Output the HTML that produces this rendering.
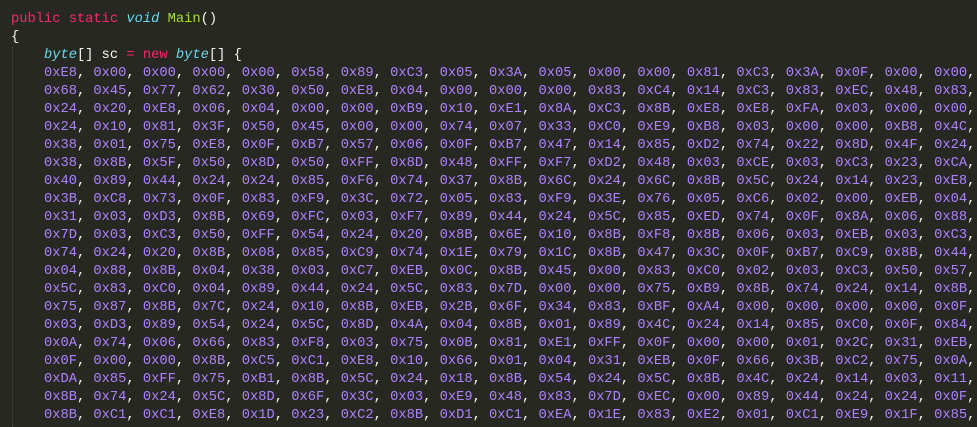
<!DOCTYPE html>
<html><head><meta charset="utf-8"><style>
html,body{margin:0;padding:0;background:#272822;width:977px;height:422px;overflow:hidden}
pre{margin:0;padding:11px 0 0 11px;font-family:"Liberation Mono",monospace;font-size:13.74px;line-height:18px;color:#F8F8F2;white-space:pre}
.k{color:#F92672}.t{color:#66D9EF;font-style:italic}.f{color:#A6E22E}.n{color:#AE81FF}
.g{position:absolute;left:12px;top:47px;height:380px;border-left:1px dotted #4a4a44}
</style></head><body>
<div class="g"></div>
<pre><span class="k">public</span> <span class="k">static</span> <span class="t">void</span> <span class="f">Main</span>()
{
    <span class="t">byte</span>[] sc <span class="k">=</span> <span class="k">new</span> <span class="t">byte</span>[] {
    <span class="n">0xE8</span>, <span class="n">0x00</span>, <span class="n">0x00</span>, <span class="n">0x00</span>, <span class="n">0x00</span>, <span class="n">0x58</span>, <span class="n">0x89</span>, <span class="n">0xC3</span>, <span class="n">0x05</span>, <span class="n">0x3A</span>, <span class="n">0x05</span>, <span class="n">0x00</span>, <span class="n">0x00</span>, <span class="n">0x81</span>, <span class="n">0xC3</span>, <span class="n">0x3A</span>, <span class="n">0x0F</span>, <span class="n">0x00</span>, <span class="n">0x00</span>,
    <span class="n">0x68</span>, <span class="n">0x45</span>, <span class="n">0x77</span>, <span class="n">0x62</span>, <span class="n">0x30</span>, <span class="n">0x50</span>, <span class="n">0xE8</span>, <span class="n">0x04</span>, <span class="n">0x00</span>, <span class="n">0x00</span>, <span class="n">0x00</span>, <span class="n">0x83</span>, <span class="n">0xC4</span>, <span class="n">0x14</span>, <span class="n">0xC3</span>, <span class="n">0x83</span>, <span class="n">0xEC</span>, <span class="n">0x48</span>, <span class="n">0x83</span>,
    <span class="n">0x24</span>, <span class="n">0x20</span>, <span class="n">0xE8</span>, <span class="n">0x06</span>, <span class="n">0x04</span>, <span class="n">0x00</span>, <span class="n">0x00</span>, <span class="n">0xB9</span>, <span class="n">0x10</span>, <span class="n">0xE1</span>, <span class="n">0x8A</span>, <span class="n">0xC3</span>, <span class="n">0x8B</span>, <span class="n">0xE8</span>, <span class="n">0xE8</span>, <span class="n">0xFA</span>, <span class="n">0x03</span>, <span class="n">0x00</span>, <span class="n">0x00</span>,
    <span class="n">0x24</span>, <span class="n">0x10</span>, <span class="n">0x81</span>, <span class="n">0x3F</span>, <span class="n">0x50</span>, <span class="n">0x45</span>, <span class="n">0x00</span>, <span class="n">0x00</span>, <span class="n">0x74</span>, <span class="n">0x07</span>, <span class="n">0x33</span>, <span class="n">0xC0</span>, <span class="n">0xE9</span>, <span class="n">0xB8</span>, <span class="n">0x03</span>, <span class="n">0x00</span>, <span class="n">0x00</span>, <span class="n">0xB8</span>, <span class="n">0x4C</span>,
    <span class="n">0x38</span>, <span class="n">0x01</span>, <span class="n">0x75</span>, <span class="n">0xE8</span>, <span class="n">0x0F</span>, <span class="n">0xB7</span>, <span class="n">0x57</span>, <span class="n">0x06</span>, <span class="n">0x0F</span>, <span class="n">0xB7</span>, <span class="n">0x47</span>, <span class="n">0x14</span>, <span class="n">0x85</span>, <span class="n">0xD2</span>, <span class="n">0x74</span>, <span class="n">0x22</span>, <span class="n">0x8D</span>, <span class="n">0x4F</span>, <span class="n">0x24</span>,
    <span class="n">0x38</span>, <span class="n">0x8B</span>, <span class="n">0x5F</span>, <span class="n">0x50</span>, <span class="n">0x8D</span>, <span class="n">0x50</span>, <span class="n">0xFF</span>, <span class="n">0x8D</span>, <span class="n">0x48</span>, <span class="n">0xFF</span>, <span class="n">0xF7</span>, <span class="n">0xD2</span>, <span class="n">0x48</span>, <span class="n">0x03</span>, <span class="n">0xCE</span>, <span class="n">0x03</span>, <span class="n">0xC3</span>, <span class="n">0x23</span>, <span class="n">0xCA</span>,
    <span class="n">0x40</span>, <span class="n">0x89</span>, <span class="n">0x44</span>, <span class="n">0x24</span>, <span class="n">0x24</span>, <span class="n">0x85</span>, <span class="n">0xF6</span>, <span class="n">0x74</span>, <span class="n">0x37</span>, <span class="n">0x8B</span>, <span class="n">0x6C</span>, <span class="n">0x24</span>, <span class="n">0x6C</span>, <span class="n">0x8B</span>, <span class="n">0x5C</span>, <span class="n">0x24</span>, <span class="n">0x14</span>, <span class="n">0x23</span>, <span class="n">0xE8</span>,
    <span class="n">0x3B</span>, <span class="n">0xC8</span>, <span class="n">0x73</span>, <span class="n">0x0F</span>, <span class="n">0x83</span>, <span class="n">0xF9</span>, <span class="n">0x3C</span>, <span class="n">0x72</span>, <span class="n">0x05</span>, <span class="n">0x83</span>, <span class="n">0xF9</span>, <span class="n">0x3E</span>, <span class="n">0x76</span>, <span class="n">0x05</span>, <span class="n">0xC6</span>, <span class="n">0x02</span>, <span class="n">0x00</span>, <span class="n">0xEB</span>, <span class="n">0x04</span>,
    <span class="n">0x31</span>, <span class="n">0x03</span>, <span class="n">0xD3</span>, <span class="n">0x8B</span>, <span class="n">0x69</span>, <span class="n">0xFC</span>, <span class="n">0x03</span>, <span class="n">0xF7</span>, <span class="n">0x89</span>, <span class="n">0x44</span>, <span class="n">0x24</span>, <span class="n">0x5C</span>, <span class="n">0x85</span>, <span class="n">0xED</span>, <span class="n">0x74</span>, <span class="n">0x0F</span>, <span class="n">0x8A</span>, <span class="n">0x06</span>, <span class="n">0x88</span>,
    <span class="n">0x7D</span>, <span class="n">0x03</span>, <span class="n">0xC3</span>, <span class="n">0x50</span>, <span class="n">0xFF</span>, <span class="n">0x54</span>, <span class="n">0x24</span>, <span class="n">0x20</span>, <span class="n">0x8B</span>, <span class="n">0x6E</span>, <span class="n">0x10</span>, <span class="n">0x8B</span>, <span class="n">0xF8</span>, <span class="n">0x8B</span>, <span class="n">0x06</span>, <span class="n">0x03</span>, <span class="n">0xEB</span>, <span class="n">0x03</span>, <span class="n">0xC3</span>,
    <span class="n">0x74</span>, <span class="n">0x24</span>, <span class="n">0x20</span>, <span class="n">0x8B</span>, <span class="n">0x08</span>, <span class="n">0x85</span>, <span class="n">0xC9</span>, <span class="n">0x74</span>, <span class="n">0x1E</span>, <span class="n">0x79</span>, <span class="n">0x1C</span>, <span class="n">0x8B</span>, <span class="n">0x47</span>, <span class="n">0x3C</span>, <span class="n">0x0F</span>, <span class="n">0xB7</span>, <span class="n">0xC9</span>, <span class="n">0x8B</span>, <span class="n">0x44</span>,
    <span class="n">0x04</span>, <span class="n">0x88</span>, <span class="n">0x8B</span>, <span class="n">0x04</span>, <span class="n">0x38</span>, <span class="n">0x03</span>, <span class="n">0xC7</span>, <span class="n">0xEB</span>, <span class="n">0x0C</span>, <span class="n">0x8B</span>, <span class="n">0x45</span>, <span class="n">0x00</span>, <span class="n">0x83</span>, <span class="n">0xC0</span>, <span class="n">0x02</span>, <span class="n">0x03</span>, <span class="n">0xC3</span>, <span class="n">0x50</span>, <span class="n">0x57</span>,
    <span class="n">0x5C</span>, <span class="n">0x83</span>, <span class="n">0xC0</span>, <span class="n">0x04</span>, <span class="n">0x89</span>, <span class="n">0x44</span>, <span class="n">0x24</span>, <span class="n">0x5C</span>, <span class="n">0x83</span>, <span class="n">0x7D</span>, <span class="n">0x00</span>, <span class="n">0x00</span>, <span class="n">0x75</span>, <span class="n">0xB9</span>, <span class="n">0x8B</span>, <span class="n">0x74</span>, <span class="n">0x24</span>, <span class="n">0x14</span>, <span class="n">0x8B</span>,
    <span class="n">0x75</span>, <span class="n">0x87</span>, <span class="n">0x8B</span>, <span class="n">0x7C</span>, <span class="n">0x24</span>, <span class="n">0x10</span>, <span class="n">0x8B</span>, <span class="n">0xEB</span>, <span class="n">0x2B</span>, <span class="n">0x6F</span>, <span class="n">0x34</span>, <span class="n">0x83</span>, <span class="n">0xBF</span>, <span class="n">0xA4</span>, <span class="n">0x00</span>, <span class="n">0x00</span>, <span class="n">0x00</span>, <span class="n">0x00</span>, <span class="n">0x0F</span>,
    <span class="n">0x03</span>, <span class="n">0xD3</span>, <span class="n">0x89</span>, <span class="n">0x54</span>, <span class="n">0x24</span>, <span class="n">0x5C</span>, <span class="n">0x8D</span>, <span class="n">0x4A</span>, <span class="n">0x04</span>, <span class="n">0x8B</span>, <span class="n">0x01</span>, <span class="n">0x89</span>, <span class="n">0x4C</span>, <span class="n">0x24</span>, <span class="n">0x14</span>, <span class="n">0x85</span>, <span class="n">0xC0</span>, <span class="n">0x0F</span>, <span class="n">0x84</span>,
    <span class="n">0x0A</span>, <span class="n">0x74</span>, <span class="n">0x06</span>, <span class="n">0x66</span>, <span class="n">0x83</span>, <span class="n">0xF8</span>, <span class="n">0x03</span>, <span class="n">0x75</span>, <span class="n">0x0B</span>, <span class="n">0x81</span>, <span class="n">0xE1</span>, <span class="n">0xFF</span>, <span class="n">0x0F</span>, <span class="n">0x00</span>, <span class="n">0x00</span>, <span class="n">0x01</span>, <span class="n">0x2C</span>, <span class="n">0x31</span>, <span class="n">0xEB</span>,
    <span class="n">0x0F</span>, <span class="n">0x00</span>, <span class="n">0x00</span>, <span class="n">0x8B</span>, <span class="n">0xC5</span>, <span class="n">0xC1</span>, <span class="n">0xE8</span>, <span class="n">0x10</span>, <span class="n">0x66</span>, <span class="n">0x01</span>, <span class="n">0x04</span>, <span class="n">0x31</span>, <span class="n">0xEB</span>, <span class="n">0x0F</span>, <span class="n">0x66</span>, <span class="n">0x3B</span>, <span class="n">0xC2</span>, <span class="n">0x75</span>, <span class="n">0x0A</span>,
    <span class="n">0xDA</span>, <span class="n">0x85</span>, <span class="n">0xFF</span>, <span class="n">0x75</span>, <span class="n">0xB1</span>, <span class="n">0x8B</span>, <span class="n">0x5C</span>, <span class="n">0x24</span>, <span class="n">0x18</span>, <span class="n">0x8B</span>, <span class="n">0x54</span>, <span class="n">0x24</span>, <span class="n">0x5C</span>, <span class="n">0x8B</span>, <span class="n">0x4C</span>, <span class="n">0x24</span>, <span class="n">0x14</span>, <span class="n">0x03</span>, <span class="n">0x11</span>,
    <span class="n">0x8B</span>, <span class="n">0x74</span>, <span class="n">0x24</span>, <span class="n">0x5C</span>, <span class="n">0x8D</span>, <span class="n">0x6F</span>, <span class="n">0x3C</span>, <span class="n">0x03</span>, <span class="n">0xE9</span>, <span class="n">0x48</span>, <span class="n">0x83</span>, <span class="n">0x7D</span>, <span class="n">0xEC</span>, <span class="n">0x00</span>, <span class="n">0x89</span>, <span class="n">0x44</span>, <span class="n">0x24</span>, <span class="n">0x24</span>, <span class="n">0x0F</span>,
    <span class="n">0x8B</span>, <span class="n">0xC1</span>, <span class="n">0xC1</span>, <span class="n">0xE8</span>, <span class="n">0x1D</span>, <span class="n">0x23</span>, <span class="n">0xC2</span>, <span class="n">0x8B</span>, <span class="n">0xD1</span>, <span class="n">0xC1</span>, <span class="n">0xEA</span>, <span class="n">0x1E</span>, <span class="n">0x83</span>, <span class="n">0xE2</span>, <span class="n">0x01</span>, <span class="n">0xC1</span>, <span class="n">0xE9</span>, <span class="n">0x1F</span>, <span class="n">0x85</span>,
</pre>
</body></html>
